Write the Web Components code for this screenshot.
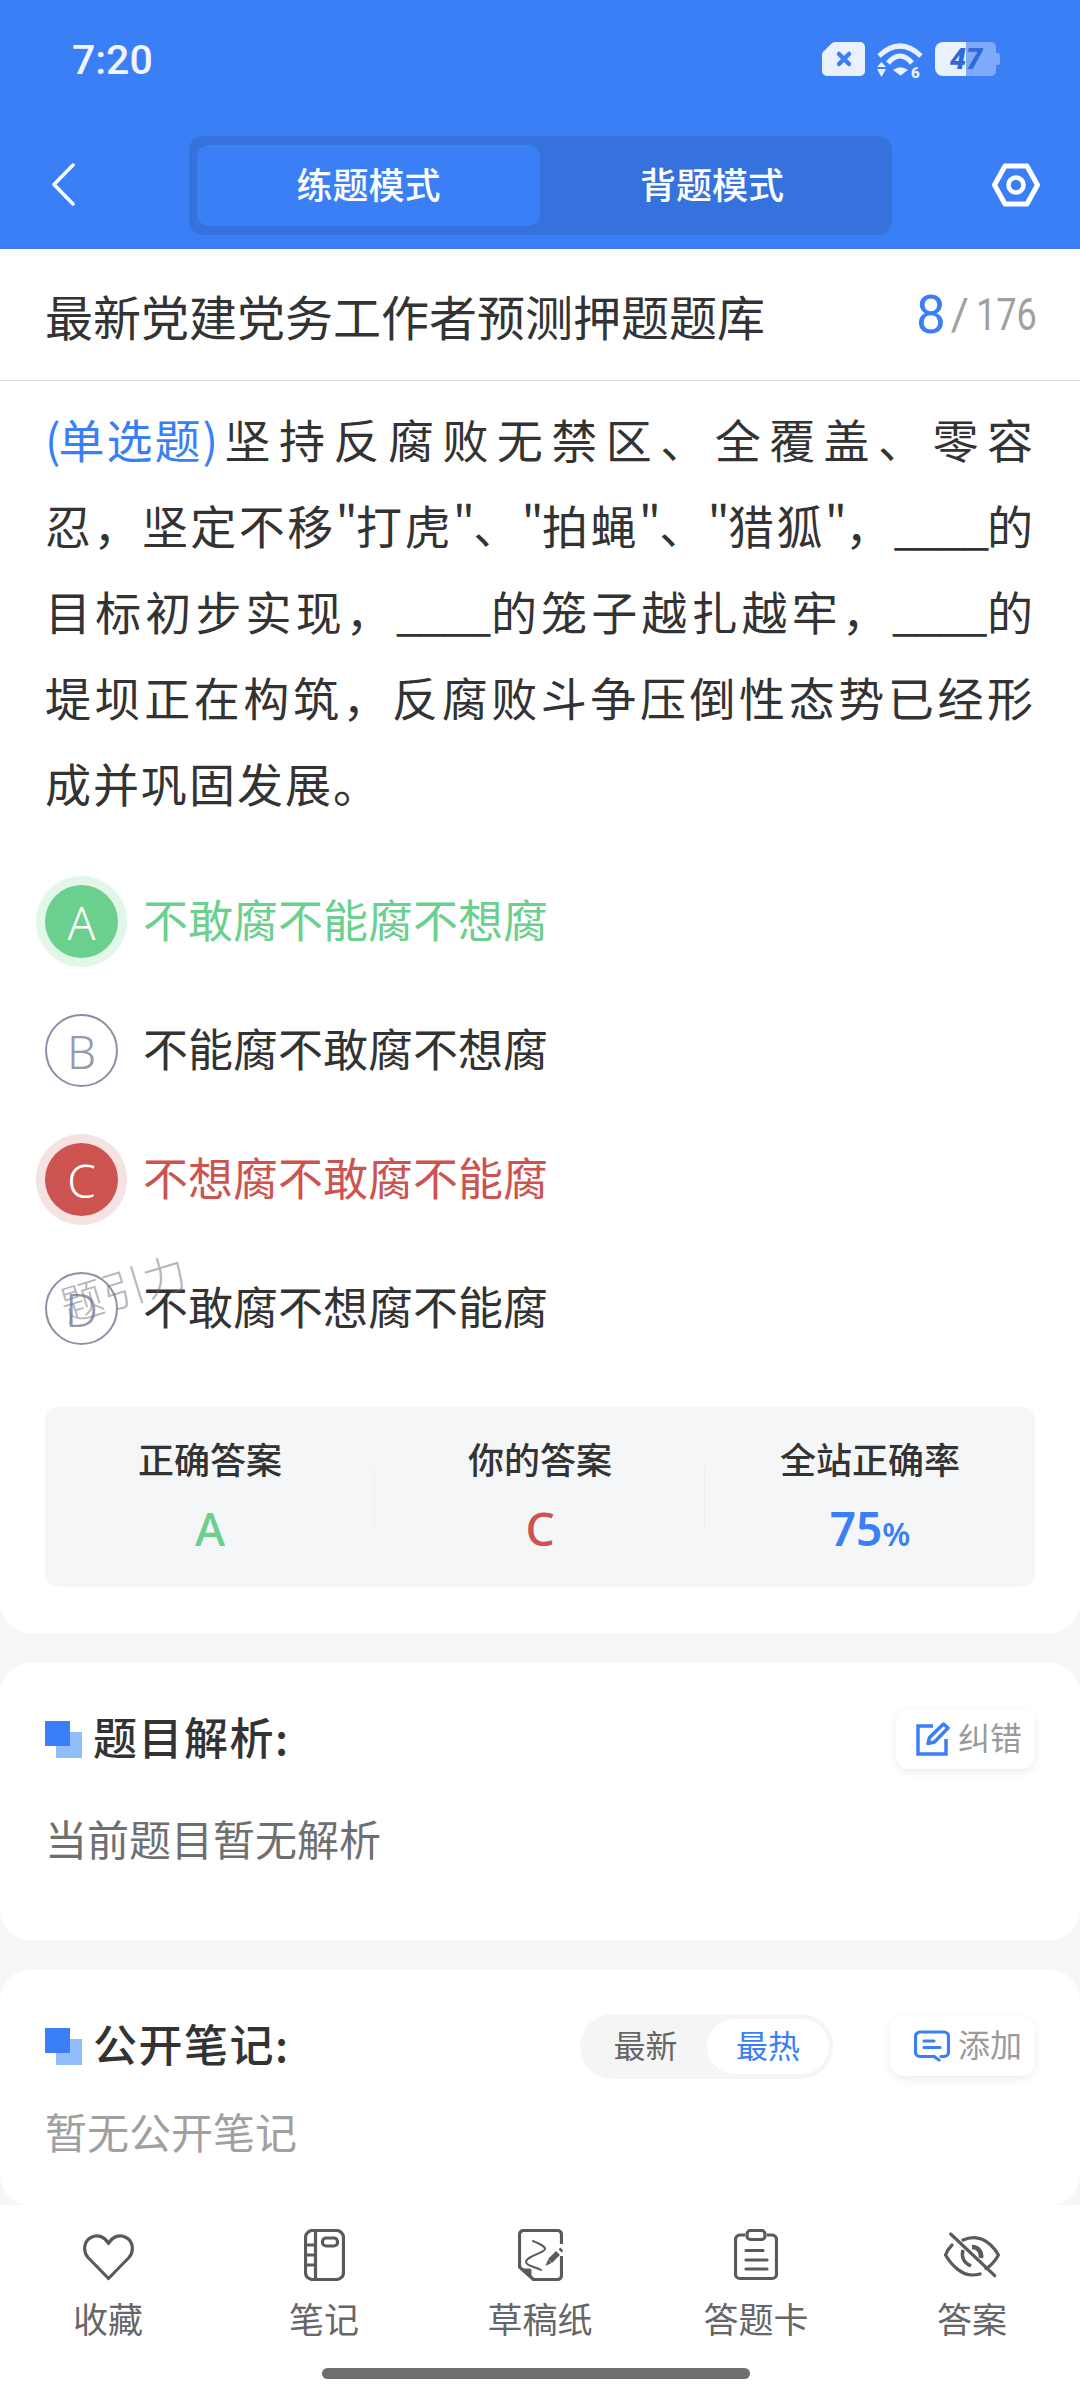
<!DOCTYPE html>
<html lang="zh">
<head>
<meta charset="utf-8">
<title>练题模式</title>
<style>
  html, body { margin: 0; padding: 0; }
  body {
    width: 1080px;
    height: 2400px;
    overflow: hidden;
    background: #f5f6f8;
    color: #333;
    font-family: "Noto Sans CJK SC", "Noto Sans", sans-serif;
    display: flex;
    flex-direction: column;
  }
  .top { display: block; background: #3b7ff7; }
</style>
</head>
<body>
  <div class="top">
    <status-bar></status-bar>
    <nav-bar></nav-bar>
  </div>

  <quiz-card>
    <quiz-title slot="title" current="8" total="176">最新党建党务工作者预测押题题库</quiz-title>
    <quiz-question slot="question" kind="单选题">坚持反腐败无禁区、全覆盖、零容|忍，坚定不移"打虎"、"拍蝇"、"猎狐"，____的|目标初步实现，____的笼子越扎越牢，____的|堤坝正在构筑，反腐败斗争压倒性态势已经形|成并巩固发展。</quiz-question>
    <quiz-option letter="A" state="right">不敢腐不能腐不想腐</quiz-option>
    <quiz-option letter="B">不能腐不敢腐不想腐</quiz-option>
    <quiz-option letter="C" state="wrong">不想腐不敢腐不能腐</quiz-option>
    <quiz-option letter="D" mark="题引力">不敢腐不想腐不能腐</quiz-option>
    <answer-stats slot="stats"></answer-stats>
  </quiz-card>

  <section-card heading="题目解析:" style="--h:277px;--gap:40px">
    <tool-button slot="actions" icon="edit">纠错</tool-button>
    <span style="color:#6f6f6f">当前题目暂无解析</span>
  </section-card>

  <section-card heading="公开笔记:" style="--h:235px;--gap:26px">
    <sort-pill slot="actions"></sort-pill>
    <tool-button slot="actions" icon="chat">添加</tool-button>
    <span style="color:#a0a0a0">暂无公开笔记</span>
  </section-card>

  <tool-bar></tool-bar>

<script>
class StatusBar extends HTMLElement {
  constructor() {
    super();
    this.attachShadow({ mode: 'open' });
    this.shadowRoot.innerHTML = `
      <style>
        :host { display: flex; align-items: center; height: 118px; padding: 0 80px 0 72px; color: #f1f5fe; }
        .time { font: 500 41px/1 Roboto, sans-serif; flex: 1; padding-top: 2px; }
        .icons { display: flex; gap: 12px; align-items: center; }
        svg { display: block; }
      </style>
      <div class="time">7:20</div>
      <div class="icons">
        <svg width="43" height="34" viewBox="0 0 43 34">
          <path fill="#eaf1fe" d="M13 0H38a5 5 0 0 1 5 5V29a5 5 0 0 1-5 5H5a5 5 0 0 1-5-5V12.500a4 4 0 0 1 1.500-3L9.500 1.500A5 5 0 0 1 13 0z"/>
          <path stroke="#3b7ff7" stroke-width="4.500" stroke-linecap="round" d="M17 12L27 22M27 12L17 22"/>
        </svg>
        <svg width="46" height="44" viewBox="0 -6 46 44">
          <g fill="none" stroke="#eaf1fe" stroke-width="5">
            <path d="M2 13Q23 -7 44 13"/>
            <path d="M11 20Q23 6 35 20"/>
          </g>
          <g fill="#eaf1fe">
            <path d="M16 27Q23.500 21.500 31 27L23.500 32.500z"/>
            <path d="M4.500 19L9 24H0zM0 26H9L4.500 34z"/>
            <text x="34" y="34.500" font-family="Roboto, sans-serif" font-size="15" font-weight="900">6</text>
          </g>
        </svg>
        <svg width="65" height="34" viewBox="0 0 65 34">
          <path fill="#7faafa" d="M24 0H56a5 5 0 0 1 5 5V11h1.500a2.500 2.500 0 0 1 2.500 2.500v7a2.500 2.500 0 0 1-2.500 2.500H61V29a5 5 0 0 1-5 5H24z"/>
          <path fill="#eaf1fe" d="M8 0H31V34H8a8 8 0 0 1-8-8V8a8 8 0 0 1 8-8z"/>
          <text x="31" y="27" text-anchor="middle" fill="#2f6bd8" font-family="Roboto, sans-serif" font-size="29" font-weight="900" font-style="italic">47</text>
        </svg>
      </div>`;
  }
}

class NavBar extends HTMLElement {
  constructor() {
    super();
    this.attachShadow({ mode: 'open' });
    this.shadowRoot.innerHTML = `
      <style>
        :host { display: flex; height: 131px; padding: 18px 40px 0 51px; box-sizing: border-box; color: #fff; }
        .back { margin: 27px 114px 0 0; display: block; }
        .tabs { width: 703px; height: 99px; box-sizing: border-box; padding: 9px 8px; background: #3672dd; border-radius: 14px; display: flex; }
        .tabs div { flex: 1; display: flex; align-items: center; justify-content: center; padding-bottom: 5px; box-sizing: border-box; font-size: 36px; font-weight: 500; border-radius: 12px; }
        .tabs .on { background: #3b7ff7; flex: 0 0 343px; }
        .hex { margin: 27px 0 0 auto; display: block; }
      </style>
      <svg class="back" width="24" height="43" viewBox="0 0 24 43" fill="none" stroke="#fff" stroke-width="3.500" stroke-linecap="round" stroke-linejoin="round"><path d="M22 2L3 21.500L22 41"/></svg>
      <div class="tabs"><div class="on">练题模式</div><div>背题模式</div></div>
      <svg class="hex" width="48" height="44" viewBox="0 0 48 44" fill="none" stroke="#fff" stroke-linejoin="round"><path stroke-width="5" d="M13 3H35L45.500 22L35 41H13L2.500 22z"/><circle cx="24" cy="22" r="7.500" stroke-width="4.500"/></svg>`;
  }
}

class QuizCard extends HTMLElement {
  constructor() {
    super();
    this.attachShadow({ mode: 'open' });
    this.shadowRoot.innerHTML = `
      <style>
        :host { display: block; background: #fff; border-radius: 0 0 30px 30px; height: 1384px; margin-bottom: 30px; }
      </style>
      <slot name="title"></slot>
      <slot name="question"></slot>
      <slot></slot>
      <slot name="stats"></slot>`;
  }
}

class QuizTitle extends HTMLElement {
  constructor() {
    super();
    this.attachShadow({ mode: 'open' });
    this.shadowRoot.innerHTML = `
      <style>
        :host { display: flex; align-items: center; justify-content: space-between; height: 131px; padding: 0 45px; border-bottom: 1px solid #dcdcdc; }
        .name { font-size: 48px; color: #333; white-space: nowrap; }
        .count { font-family: Roboto, sans-serif; color: #a0a0a0; font-size: 44px; font-weight: 400; white-space: nowrap; display: flex; align-items: center; line-height: 60px; }
        .count b { color: #3b7ff7; font-size: 53px; font-weight: 400; margin-right: 5px; }
        .count i { font-style: normal; margin-right: 7px; }
        .count span { display: block; width: 59px; }
        .count span em { display: block; font-style: normal; width: 72px; transform: scaleX(.82); transform-origin: left; }
      </style>
      <div class="name"><slot></slot></div>
      <div class="count"><b>${this.getAttribute('current')}</b><i>/</i><span><em>${this.getAttribute('total')}</em></span></div>`;
  }
}

class QuizQuestion extends HTMLElement {
  constructor() {
    super();
    this.attachShadow({ mode: 'open' });
  }

  connectedCallback() {
    // each line of the reference is set on its own and stretched to the full width
    const lines = this.textContent.split('|').map(l => l
      .replace(/"/g, '<span class="q">"</span>')
      .replace(/____/g, '<span class="blank">____</span>'));
    const kind = `<span class="kind"><span class="p">(</span>${this.getAttribute('kind')}<span class="p">)</span></span>`;
    this.shadowRoot.innerHTML = `
      <style>
        :host { display: block; height: 476px; box-sizing: border-box; padding: 14px 45px 0; font-size: 46px; line-height: 86px; letter-spacing: 2px; color: #333; }
        .line { text-align: justify; text-align-last: justify; white-space: nowrap; }
        .line:last-child { text-align-last: left; }
        .kind { display: inline-block; color: #3b7ff7; margin-right: 2px; }
        .p { letter-spacing: -2px; }
        .kind .p:last-child { letter-spacing: 0; margin-right: -2px; }
        .blank { display: inline-block; letter-spacing: -2.500px; }
        .q { letter-spacing: -2px; }
      </style>
      ${lines.map((l, i) => `<div class="line">${i === 0 ? kind : ''}${l}</div>`).join('')}`;
  }
}

class QuizOption extends HTMLElement {
  constructor() {
    super();
    this.attachShadow({ mode: 'open' });
    const state = this.getAttribute('state') || '';
    const mark = this.getAttribute('mark');
    this.shadowRoot.innerHTML = `
      <style>
        :host { display: flex; align-items: center; gap: 25px; height: 129px; padding-left: 45px; position: relative; font-size: 45px; color: #333; }
        .txt { padding-bottom: 6px; }
        .dot { width: 73px; height: 73px; box-sizing: border-box; border-radius: 50%; border: 2px solid #8d8fa5; color: #9698ae; display: flex; align-items: center; justify-content: center; font: 300 46px/1 "Noto Sans", sans-serif; flex: none; }
        :host([state="right"]) { color: #6bcf8d; }
        :host([state="wrong"]) { color: #cd5350; }
        .right, .wrong { border: 0; color: #fff; }
        .right { background: #6bcf8d; box-shadow: 0 0 0 9px #e2f6e9; }
        .wrong { background: #cd5350; box-shadow: 0 0 0 9px #f5e2e2; }
        .mark { position: absolute; left: 58px; top: 12px; font-size: 43px; font-weight: 300; line-height: 60px; color: rgba(110,110,120,.5); transform: rotate(-17deg); white-space: nowrap; }
      </style>
      <div class="dot ${state}">${this.getAttribute('letter')}</div>
      <div class="txt"><slot></slot></div>
      ${mark ? `<span class="mark">${mark}</span>` : ''}`;
  }
}

class AnswerStats extends HTMLElement {
  constructor() {
    super();
    this.attachShadow({ mode: 'open' });
    this.shadowRoot.innerHTML = `
      <style>
        :host { display: grid; grid-template-columns: 1fr 1fr 1fr; height: 180px; margin: 34px 45px 0; background: #f5f6f8; border-radius: 14px; }
        .cell { position: relative; display: flex; flex-direction: column; align-items: center; padding-top: 27px; }
        .cell + .cell::before { content: ""; position: absolute; left: -1px; top: 61px; height: 59px; width: 1px; background: #ebedef; }
        .label { font-size: 36px; font-weight: 500; line-height: 48px; color: #333; }
        .val { font: 500 46px/56px "Noto Sans", sans-serif; margin-top: 18px; }
        .val.rate { font-weight: 600; }
        .val small { font-size: 32px; }
      </style>
      <div class="cell"><div class="label">正确答案</div><div class="val" style="color:#6bcf8d">A</div></div>
      <div class="cell"><div class="label">你的答案</div><div class="val" style="color:#cd5350">C</div></div>
      <div class="cell"><div class="label">全站正确率</div><div class="val rate" style="color:#3b7ff7">75<small>%</small></div></div>`;
  }
}

class SectionCard extends HTMLElement {
  constructor() {
    super();
    this.attachShadow({ mode: 'open' });
    this.shadowRoot.innerHTML = `
      <style>
        :host { display: block; background: #fff; border-radius: 30px; height: var(--h); box-sizing: border-box; padding: 45px 45px 0; margin-bottom: 30px; }
        :host(:last-of-type) { margin-bottom: 0; }
        .head { display: flex; align-items: center; height: 62px; }
        .mark { width: 37px; height: 37px; position: relative; margin-right: 11px; flex: none; }
        .mark i { position: absolute; width: 26px; height: 26px; }
        .mark .a { right: 0; bottom: 0; background: #91bdfb; }
        .mark .b { left: 0; top: 0; width: 25px; height: 25px; background: #3b7ff7; }
        h3 { margin: 0; flex: 1; padding-bottom: 6px; font-size: 44px; font-weight: 500; letter-spacing: 1.500px; color: #333; }
        .actions { display: flex; align-items: center; gap: 57px; }
        .body { margin-top: var(--gap); font-size: 42px; line-height: 56px; }
      </style>
      <div class="head">
        <div class="mark"><i class="a"></i><i class="b"></i></div>
        <h3>${this.getAttribute('heading')}</h3>
        <div class="actions"><slot name="actions"></slot></div>
      </div>
      <div class="body"><slot></slot></div>`;
  }
}

class ToolButton extends HTMLElement {
  constructor() {
    super();
    this.attachShadow({ mode: 'open' });
    const icons = {
      edit: `<svg width="34" height="34" viewBox="0 0 34 34" fill="none" stroke="#3b7ff7" stroke-width="3.500"><path d="M17 4H2V32H30V17"/><path stroke-linejoin="round" d="M27.500 2L32 6L18.500 20L12 21.500L13.500 15.500z"/></svg>`,
      chat: `<svg width="36" height="32" viewBox="0 0 36 32" fill="none" stroke="#3b7ff7" stroke-width="3.200" stroke-linecap="round" stroke-linejoin="round"><path d="M20 26.500H6a4.500 4.500 0 0 1-4.500-4.500V6.500A4.500 4.500 0 0 1 6 2H30a4.500 4.500 0 0 1 4.500 4.500V22a4.500 4.500 0 0 1-4.500 4.500H27"/><path d="M20 26.500L25 30"/><path d="M10 11H20M10 17.500H26"/></svg>`
    };
    this.shadowRoot.innerHTML = `
      <style>
        :host { display: flex; align-items: center; gap: 8px; height: 60px; padding: 0 13px 0 20px; background: #fff; border-radius: 14px; box-shadow: 0 3px 10px rgba(0,0,0,.08); font-size: 32px; color: #9a9a9a; }
        :host([icon="chat"]) { padding-left: 24px; }
        svg { display: block; }
        .txt { padding-bottom: 7px; }
      </style>
      ${icons[this.getAttribute('icon')]}<div class="txt"><slot></slot></div>`;
  }
}

class SortPill extends HTMLElement {
  constructor() {
    super();
    this.attachShadow({ mode: 'open' });
    this.shadowRoot.innerHTML = `
      <style>
        :host { display: flex; align-items: center; width: 253px; height: 65px; box-sizing: border-box; padding: 0 4px; background: #f5f5f5; border-radius: 33px; font-size: 32px; color: #666; }
        div { flex: 1; text-align: center; height: 55px; line-height: 50px; border-radius: 28px; }
        .on { flex: 0 0 122px; background: #fff; color: #3b7ff7; }
      </style>
      <div>最新</div><div class="on">最热</div>`;
  }
}

class ToolBar extends HTMLElement {
  constructor() {
    super();
    this.attachShadow({ mode: 'open' });
    const items = [
      ['收藏', `<path d="M25.500 49.500L5 28.500C-.500 22 1 12 8 8.500C14 5 21 7 25.500 14.500C30 7 37 5 43 8.500C50 12 51.500 22 46 28.500z"/>`, 51],
      ['笔记', `<rect x="1.500" y="1.500" width="38" height="49" rx="7"/><path d="M11.500 1.500V50.500M1.500 16H11.500M1.500 26H11.500M1.500 36H11.500"/><rect x="18.500" y="9" width="15" height="8" rx="3.500"/>`, 41],
      ['草稿纸', `<path d="M43.500 27V46.500A4 4 0 0 1 39.500 50.500H15.500L1.500 38V5.500A4 4 0 0 1 6 1.500H39A4 4 0 0 1 43.500 5.500V15"/><path fill="#5a5a5a" stroke="none" d="M3 39.500H11.500A2 2 0 0 1 13.500 41.500V49z"/><path stroke-width="2" stroke-linecap="round" d="M15 12C22 15 27 17 27 20C27 24 8 27 8 33C8 37 18 38 23 41"/><path stroke-width="5.500" d="M40 24L32 32"/><path fill="#5a5a5a" stroke="none" d="M30 30.500L33.500 34L27.500 37z"/><path stroke-width="2.500" d="M41.500 19.500L44.500 22.500"/>`, 45],
      ['答题卡', `<path d="M11 6H6A4.500 4.500 0 0 0 1.500 10.500V45A4.500 4.500 0 0 0 6 49.500H38A4.500 4.500 0 0 0 42.500 45V10.500A4.500 4.500 0 0 0 38 6H33"/><rect x="13" y="1.500" width="18" height="9" rx="3.500"/><path stroke-linecap="round" d="M12 21.500H29M12 31H33M12 40H33"/>`, 44],
      ['答案', `<path stroke-linecap="round" d="M19 11C32 5 45 10 54.500 26C51 32 47 37 42 39.500"/><path stroke-linecap="round" d="M8 16C5 19 3 22 1.500 26C8 37 18 46 28 46C31 46 33 46 36 45"/><path stroke-linecap="round" d="M6.700 5L50.700 46.700"/><path stroke-width="3.500" d="M19 21C17 28 20 34 27 37"/><path stroke-width="4.500" d="M28 18C34 18 38 23 37 29"/>`, 56]
    ];
    const cells = items.map(([name, path, w]) => `
      <div class="item">
        <div class="ico"><svg width="${w}" height="52" viewBox="0 0 ${w} 52" fill="none" stroke="#5a5a5a" stroke-width="3.200" stroke-linejoin="round">${path}</svg></div>
        <div class="name">${name}</div>
      </div>`).join('');
    this.shadowRoot.innerHTML = `
      <style>
        :host { display: block; flex: 1; background: #fff; position: relative; }
        .row { display: grid; grid-template-columns: repeat(5, 216px); padding-top: 24px; }
        .item { display: flex; flex-direction: column; align-items: center; }
        .ico { height: 52px; display: flex; align-items: center; }
        svg { display: block; }
        .name { margin-top: 12px; font-size: 35px; line-height: 50px; color: #666; }
        .home { width: 428px; height: 11px; background: #6e6e6e; border-radius: 6px; position: absolute; left: 322px; top: 163px; }
      </style>
      <div class="row">${cells}</div>
      <div class="home"></div>`;
  }
}

customElements.define('status-bar', StatusBar);
customElements.define('nav-bar', NavBar);
customElements.define('quiz-card', QuizCard);
customElements.define('quiz-title', QuizTitle);
customElements.define('quiz-question', QuizQuestion);
customElements.define('quiz-option', QuizOption);
customElements.define('answer-stats', AnswerStats);
customElements.define('section-card', SectionCard);
customElements.define('tool-button', ToolButton);
customElements.define('sort-pill', SortPill);
customElements.define('tool-bar', ToolBar);
</script>
</body>
</html>
